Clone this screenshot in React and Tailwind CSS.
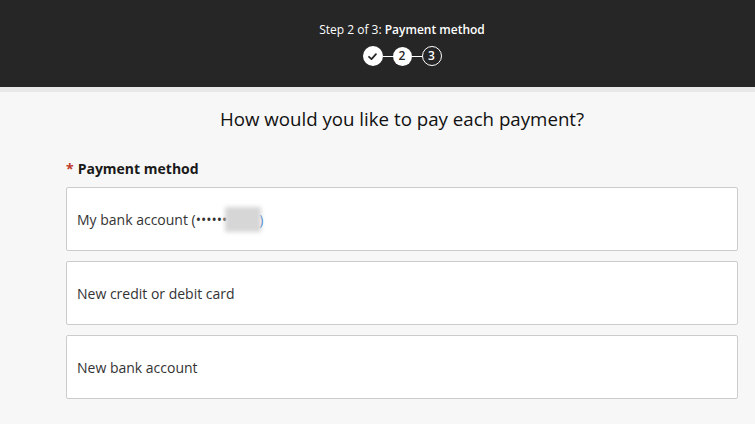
import React from 'react';

const font = { fontFamily: '"Open Sans", "Noto Sans", sans-serif' };

function Stepper() {
  return (
    <div className="flex items-center justify-center">
      <div className="w-[20px] h-[20px] rounded-full bg-white flex items-center justify-center">
        <svg width="11" height="11" viewBox="0 0 12 12" fill="none">
          <path d="M2.2 6.3 L4.9 8.9 L9.8 3.4" stroke="#262626" strokeWidth="1.9" strokeLinecap="round" strokeLinejoin="round" />
        </svg>
      </div>
      <div className="w-[10px] h-px bg-white" />
      <div className="w-[19px] h-[19px] rounded-full bg-white flex items-center justify-center text-[12px] font-semibold text-[#262626] leading-none">
        2
      </div>
      <div className="w-[10px] h-px bg-white" />
      <div className="w-[20px] h-[20px] rounded-full border border-white flex items-center justify-center text-[12px] font-semibold text-white leading-none">
        3
      </div>
    </div>
  );
}

function OptionCard({ children }) {
  return (
    <div className="h-[64px] bg-white border border-[#cccccc] rounded-[2px] flex items-center px-[10px] text-[14px] text-[#333333]">
      {children}
    </div>
  );
}

export default function App() {
  return (
    <div className="w-[755px] h-[424px] overflow-hidden bg-[#f7f7f7]" style={font}>
      <div className="w-[804px]">
        {/* Header */}
        <div className="bg-[#262626] h-[87px] pt-[22px] flex flex-col items-center gap-2">
          <p className="text-white text-[12px] leading-4">
            Step 2 of 3: <span className="font-semibold">Payment method</span>
          </p>
          <Stepper />
        </div>
        <div className="h-[5px] bg-[#e8e8e8]" />

        {/* Body */}
        <div className="w-[672px] mx-auto pt-[15px]">
          <h1 className="text-center text-[18.7px] leading-6 font-medium text-[#111111]">
            How would you like to pay each payment?
          </h1>
          <p className="mt-[28px] text-[14px] leading-5 font-bold text-[#1a1a1a]">
            <span className="text-[#c0392b] mr-[4px]">*</span>Payment method
          </p>
          <div className="mt-[8px] flex flex-col gap-[10px]">
            <OptionCard>
              My bank account (••••••
              <span className="inline-block w-[36px] h-[25px] bg-[#d6d6d6] blur-[2px] -ml-[2px]" />
              <span className="text-[#2d6fc4] -ml-[2px]">)</span>
            </OptionCard>
            <OptionCard>New credit or debit card</OptionCard>
            <OptionCard>New bank account</OptionCard>
          </div>
        </div>
      </div>
    </div>
  );
}
